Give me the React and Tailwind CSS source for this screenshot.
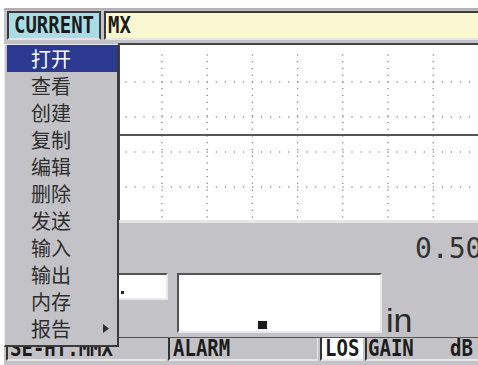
import React from "react";

const menuItems = ["打开", "查看", "创建", "复制", "编辑", "删除", "发送", "输入", "输出", "内存", "报告"];

const Pix = ({ children }) => (
  <span className="inline-block scale-y-[1.2] font-bold text-[19px] leading-none text-[#1c1c1c] font-['DejaVu_Sans_Mono',monospace]">
    {children}
  </span>
);

const Graph = () => {
  const cols = [0, 1, 2, 3, 4, 5, 6].map((i) => 42 + i * 45.2);
  const rows = [37, 72, 107, 142];
  const vdots = [];
  for (let y = 10; y < 175; y += 6.75) vdots.push(y);
  const hdots = [];
  for (let x = 6; x < 354; x += 9.04) hdots.push(x);

  return (
    <svg width="358" height="175" className="block">
      {cols.map((x) =>
        vdots.map((y) => <circle key={`v${x}-${y}`} cx={x} cy={y} r="0.8" fill="#8c8c8c" />)
      )}
      {rows.map((y) =>
        hdots.map((x) => <circle key={`h${x}-${y}`} cx={x} cy={y} r="0.8" fill="#8c8c8c" />)
      )}
      <line x1="0" y1="90" x2="358" y2="90" stroke="#555" strokeWidth="2" />
    </svg>
  );
};

const App = () => {
  return (
    <div className="w-[478px] h-[365px] bg-white pt-[8px] pl-[4px] overflow-hidden relative">
      <div className="h-[357px] bg-[#c3c3c7] flex flex-col border-t-2 border-[#b0b0b4]">
        {/* top bar */}
        <div className="h-[33px] pt-[1px] pl-[3px] flex gap-[3px]">
          <div className="w-[94px] h-[29px] bg-[#a9dde6] border-2 border-[#3a3a3a] border-b-[#e4e4e6] flex items-center justify-center">
            <Pix>CURRENT</Pix>
          </div>
          <div className="flex-1 h-[29px] bg-[#f9f7cf] border-2 border-r-0 border-[#3a3a3a] border-b-[#e4e4e6] flex items-center pl-[2px]">
            <Pix>MX</Pix>
          </div>
        </div>

        {/* graph row */}
        <div className="h-[177px] flex">
          <div className="w-[114px]" />
          <div className="flex-1 bg-white border-t-2 border-l-2 border-[#444]">
            <Graph />
          </div>
        </div>

        {/* reading area */}
        <div className="h-[117px] border-t-[3px] border-[#e6e6e8] flex flex-col">
          <div className="pt-[12px] pl-[411px] whitespace-nowrap text-[28px] leading-[28px] text-[#333] font-['DejaVu_Sans_Mono',monospace]">
            0.50
          </div>
          <div className="mt-[10px] flex items-start">
            <div className="ml-[96px] w-[68px] h-[27px] bg-white border-2 border-[#555] border-r-[#e8e8ea] border-b-[#e8e8ea] flex items-end pl-[19px] pb-[4px]">
              <span className="block w-[3px] h-[3px] bg-[#222]" />
            </div>
            <div className="ml-[9px] w-[205px] h-[60px] bg-white border-2 border-[#555] border-r-[#e8e8ea] border-b-[#e8e8ea] flex items-end pl-[79px] pb-[2px]">
              <span className="block w-[9px] h-[8px] bg-[#1a1a1a]" />
            </div>
            <div className="self-end ml-[4px] mb-[-1px] text-[34px] leading-[28px] text-[#2a2a2a] font-['Liberation_Sans',sans-serif]">
              in
            </div>
          </div>
        </div>

        {/* status bar */}
        <div className="h-[28px] border-t border-[#555] flex gap-[2px] pl-[2px]">
          <div className="w-[160px] h-[23px] border-l-2 border-[#333] border-b-2 border-b-[#e8e8ea] flex items-center pl-[2px] overflow-hidden">
            <Pix>SE-HT.MMX</Pix>
          </div>
          <div className="w-[150px] h-[23px] border-l-2 border-[#333] border-r border-r-[#e8e8ea] border-b-2 border-b-[#e8e8ea] flex items-center pl-[3px]">
            <Pix>ALARM</Pix>
          </div>
          <div className="w-[43px] h-[23px] bg-white border-l-2 border-[#333] border-b-2 border-b-[#e8e8ea] flex items-center pl-[3px]">
            <Pix>LOS</Pix>
          </div>
          <div className="flex-1 h-[23px] border-l-2 border-[#333] border-b-2 border-b-[#e8e8ea] flex items-center justify-between pl-[1px] pr-[5px]">
            <Pix>GAIN</Pix>
            <Pix>dB</Pix>
          </div>
        </div>
      </div>

      {/* popup menu */}
      <div className="absolute left-[4px] top-[44px] w-[115px] bg-[#c3c3c7] border-l border-t border-[#e8e8ea] border-r-2 border-b-2 border-r-[#3a3a3a] border-b-[#3a3a3a] pl-[2px] pb-[3px]">
        {menuItems.map((item, i) => (
          <div
            key={item}
            className={
              i === 0
                ? "h-[27px] flex items-center pl-[24px] bg-[#2c3990] text-white text-[20px] leading-none font-['Noto_Sans_CJK_SC',sans-serif]"
                : "h-[27px] flex items-center pl-[24px] text-[#2e2e2e] text-[20px] leading-none font-['Noto_Sans_CJK_SC',sans-serif]"
            }
          >
            <span>{item}</span>
            {item === "报告" && (
              <svg width="6" height="9" className="ml-auto mr-[8px]">
                <polygon points="0,0 6,4.5 0,9" fill="#2e2e2e" />
              </svg>
            )}
          </div>
        ))}
      </div>
    </div>
  );
};

export default App;
